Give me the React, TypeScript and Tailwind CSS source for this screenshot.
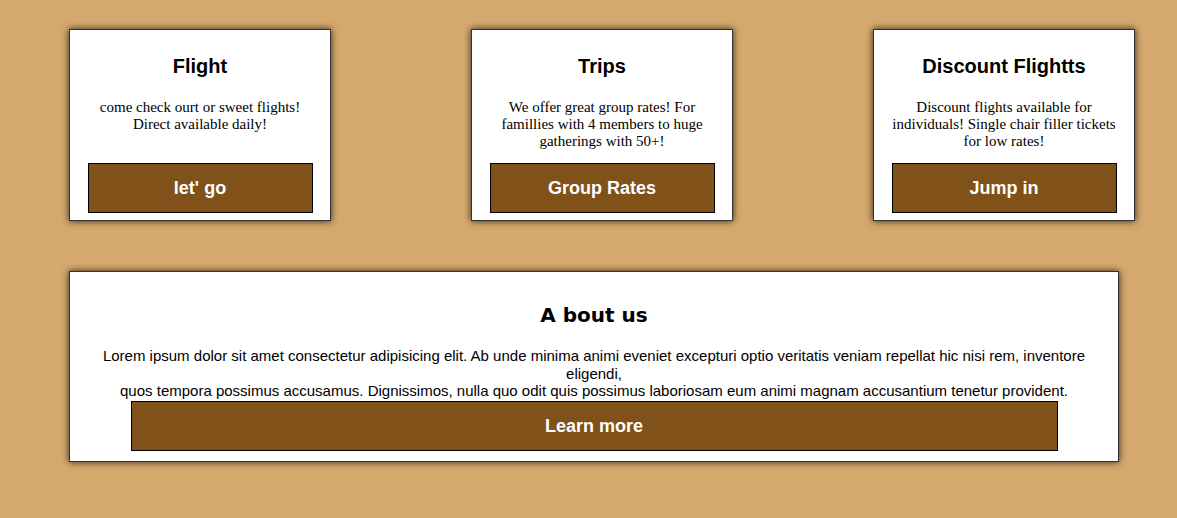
const cards = [
  {
    title: "Flight",
    text: "come check ourt or sweet flights! Direct available daily!",
    button: "let' go",
  },
  {
    title: "Trips",
    text: "We offer great group rates! For famillies with 4 members to huge gatherings with 50+!",
    button: "Group Rates",
  },
  {
    title: "Discount Flightts",
    text: "Discount flights available for individuals! Single chair filler tickets for low rates!",
    button: "Jump in",
  },
]

const App = () => {
  return (
    <div className="min-h-[518px] w-full bg-[#d5a86d] pl-[69px] pt-[29px] font-['Liberation_Sans',Arial,sans-serif] text-black">
      {/* CARDS */}
      <div className="flex gap-[140px]">
        {cards.map((card) => (
          <div
            key={card.title}
            className="flex h-[192px] w-[262px] flex-col items-center border border-[#333] bg-white px-[18px] pt-[25px] pb-[7px] shadow-[0_0_7px_rgba(0,0,0,0.8)]"
          >
            <h2 className="text-[20px] leading-[23px] font-bold">{card.title}</h2>
            <p className="mt-[21px] text-center font-['Liberation_Serif','Times_New_Roman',serif] text-[15px] leading-[17px]">
              {card.text}
            </p>
            <button className="mt-auto h-[50px] w-[225px] shrink-0 border border-black bg-[#805219] text-[18px] font-bold text-white">
              {card.button}
            </button>
          </div>
        ))}
      </div>

      {/* ABOUT */}
      <div className="mt-[50px] flex h-[191px] w-[1050px] flex-col items-center border border-[#333] bg-white px-4 pt-[32px] shadow-[0_0_7px_rgba(0,0,0,0.8)]">
        <h2 className="font-['DejaVu_Sans',Verdana,sans-serif] text-[20px] leading-[23px] font-bold">A bout us</h2>
        <p className="mt-[20px] text-center text-[15px] leading-[17.5px]">
          Lorem ipsum dolor sit amet consectetur adipisicing elit. Ab unde minima animi eveniet excepturi optio veritatis veniam repellat hic nisi rem, inventore eligendi,
          <br />
          quos tempora possimus accusamus. Dignissimos, nulla quo odit quis possimus laboriosam eum animi magnam accusantium tenetur provident.
        </p>
        <button className="mt-[1px] h-[50px] w-[927px] shrink-0 border border-black bg-[#805219] pt-[2px] text-[18px] font-bold text-white">
          Learn more
        </button>
      </div>
    </div>
  )
}

export default App
